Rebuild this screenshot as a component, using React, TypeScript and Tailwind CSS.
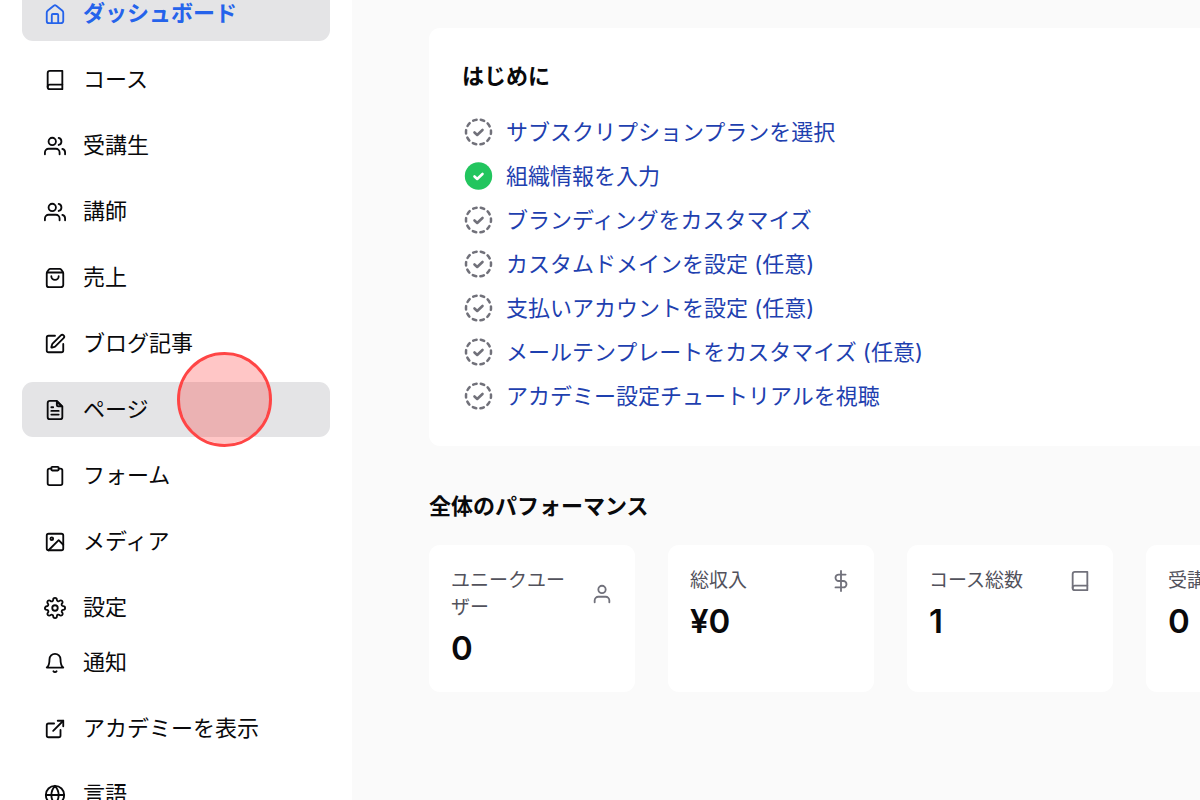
import type { ReactNode } from "react"
import { SquarePen } from "lucide-react"
import {
  FiBell,
  FiBook,
  FiClipboard,
  FiDollarSign,
  FiExternalLink,
  FiGlobe,
  FiImage,
  FiSettings,
  FiUser,
  FiUsers,
} from "react-icons/fi"
import clsx from "clsx"

function LineIcon({ children }: { children: ReactNode }) {
  return (
    <svg width={22} height={22} viewBox="0 0 24 24" fill="none" stroke="currentColor" strokeWidth={2} strokeLinecap="round" strokeLinejoin="round" className="shrink-0">
      {children}
    </svg>
  )
}

function HomeIcon() {
  return (
    <LineIcon>
      <path d="M11 2.8 4.2 8.1C3.4 8.7 3 9.5 3 10.5V19.5A2.5 2.5 0 0 0 5.5 22H18.5A2.5 2.5 0 0 0 21 19.5V10.5C21 9.5 20.6 8.7 19.8 8.1L13 2.8C12.4 2.3 11.6 2.3 11 2.8Z" />
      <path d="M8.5 22V13.2A1.2 1.2 0 0 1 9.7 12H14.3A1.2 1.2 0 0 1 15.5 13.2V22" />
    </LineIcon>
  )
}

function BagIcon() {
  return (
    <LineIcon>
      <path d="M5.3 2.8C5.7 2.3 6.2 2 6.8 2H17.2C17.8 2 18.3 2.3 18.7 2.8L20.5 5.3C20.8 5.8 21 6.3 21 6.9V19.5A2.5 2.5 0 0 1 18.5 22H5.5A2.5 2.5 0 0 1 3 19.5V6.9C3 6.3 3.200 5.8 3.500 5.3Z" />
      <path d="M3.500 6H20.500" />
      <path d="M16 10A4 4 0 0 1 8 10" />
    </LineIcon>
  )
}

function PageIcon() {
  return (
    <LineIcon>
      <path d="M14 2H6.5A2.5 2.5 0 0 0 4 4.5V19.5A2.5 2.5 0 0 0 6.5 22H17.5A2.5 2.5 0 0 0 20 19.5V8Z" />
      <path d="M14 2.5V6.5A1.5 1.5 0 0 0 15.5 8H19.5Z" fill="currentColor" fillOpacity={0.4} />
      <path d="M10 9H8M16 13H8M16 17H8" />
    </LineIcon>
  )
}

function StepIcon({ done }: { done?: boolean }) {
  return (
    <svg width={33} height={33} viewBox="0 0 33 33" fill="none" strokeLinecap="round" strokeLinejoin="round" className="shrink-0">
      {done ? (
        <circle cx="16.5" cy="16" r="13.7" fill="#22c55e" />
      ) : (
        <circle cx="16.5" cy="16" r="12.5" stroke="#71717a" strokeWidth="2.5" pathLength="100" strokeDasharray="4.5 5.5" strokeDashoffset="2" />
      )}
      <path d="M12.5 16.500l2.700 2.500 5.300-5" stroke={done ? "#ffffff" : "#71717a"} strokeWidth="2.6" />
    </svg>
  )
}

const navItems: { label: string; icon: ReactNode; active?: boolean; hovered?: boolean }[] = [
  { label: "ダッシュボード", icon: <HomeIcon />, active: true },
  { label: "コース", icon: <FiBook size={22} /> },
  { label: "受講生", icon: <FiUsers size={22} /> },
  { label: "講師", icon: <FiUsers size={22} /> },
  { label: "売上", icon: <BagIcon /> },
  { label: "ブログ記事", icon: <SquarePen size={22} /> },
  { label: "ページ", icon: <PageIcon />, hovered: true },
  { label: "フォーム", icon: <FiClipboard size={22} /> },
  { label: "メディア", icon: <FiImage size={22} /> },
  { label: "設定", icon: <FiSettings size={22} /> },
]

const footerItems = [
  { label: "通知", icon: <FiBell size={22} /> },
  { label: "アカデミーを表示", icon: <FiExternalLink size={22} /> },
  { label: "言語", icon: <FiGlobe size={22} /> },
]

const steps = [
  { title: "サブスクリプションプランを選択" },
  { title: "組織情報を入力", done: true },
  { title: "ブランディングをカスタマイズ" },
  { title: "カスタムドメインを設定 (任意)" },
  { title: "支払いアカウントを設定 (任意)" },
  { title: "メールテンプレートをカスタマイズ (任意)" },
  { title: "アカデミー設定チュートリアルを視聴" },
]

const stats = [
  { label: "ユニークユーザー", value: "0", icon: FiUser },
  { label: "総収入", value: "¥0", icon: FiDollarSign },
  { label: "コース総数", value: "1", icon: FiBook },
  { label: "受講生", value: "0", icon: FiUsers },
]

function NavItem({ label, icon, active, hovered }: { label: string; icon: ReactNode; active?: boolean; hovered?: boolean }) {
  return (
    <a
      href="#"
      className={clsx(
        "relative flex h-[55px] items-center gap-[17px] rounded-[11px] px-[22px]",
        (active || hovered) && "bg-[#e4e4e6]",
        active && "font-bold text-[#2563eb]"
      )}
    >
      {icon}
      <span>{label}</span>
      {hovered && (
        <span className="pointer-events-none absolute -top-[30px] left-[155px] z-10 size-[95px] rounded-full border-3 border-[#ff4545] bg-[#ff1c1c]/25 bg-clip-padding" />
      )}
    </a>
  )
}

export default function App() {
  return (
    <div className="flex h-screen overflow-hidden bg-[#fafafa] font-['Inter','Noto_Sans_CJK_JP',sans-serif] text-[22px] leading-[33px] text-zinc-950">
      <aside className="w-[352px] shrink-0 bg-white px-[22px]">
        <nav className="-mt-[14px] flex flex-col gap-[11px]">
          {navItems.map((item) => (
            <NavItem key={item.label} {...item} />
          ))}
        </nav>
        <div className="flex flex-col gap-[11px]">
          {footerItems.map((item) => (
            <NavItem key={item.label} {...item} />
          ))}
        </div>
      </aside>

      <main className="min-w-0 flex-1 overflow-hidden pt-7 pl-[77px]">
        <section className="rounded-l-[11px] bg-white p-[33px]">
          <h2 className="leading-[31px] font-bold">はじめに</h2>
          <ul className="mt-6 flex flex-col gap-[11px]">
            {steps.map((step) => (
              <li key={step.title} className="flex items-center gap-[11px]">
                <StepIcon done={step.done} />
                <a href="#" className="text-[#1e40af]">
                  {step.title}
                </a>
              </li>
            ))}
          </ul>
        </section>

        <h2 className="mt-11 font-bold">全体のパフォーマンス</h2>
        <div className="mt-[22px] flex gap-[33px]">
          {stats.map((stat) => {
            const Icon = stat.icon
            return (
              <div key={stat.label} className="w-[206px] shrink-0 rounded-[11px] bg-white p-[22px]">
                <div className="flex items-center justify-between gap-6 text-[19px] leading-[27px] text-zinc-600">
                  <span>{stat.label}</span>
                  <Icon size={22} className="shrink-0 text-zinc-500" />
                </div>
                <p className="mt-[5px] text-[33px] leading-[44px] font-semibold">{stat.value}</p>
              </div>
            )
          })}
        </div>
      </main>
    </div>
  )
}
